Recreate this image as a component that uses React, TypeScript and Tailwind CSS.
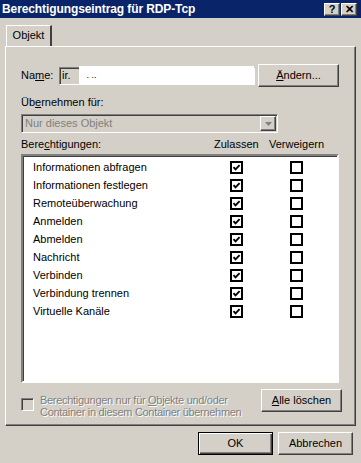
import type { ReactNode } from "react";

const font = { fontFamily: '"Liberation Sans", Arial, sans-serif' };

const perms = [
  "Informationen abfragen",
  "Informationen festlegen",
  "Remoteüberwachung",
  "Anmelden",
  "Abmelden",
  "Nachricht",
  "Verbinden",
  "Verbindung trennen",
  "Virtuelle Kanäle",
];

// classic raised 3D push button
function Btn({ children, w, primary }: { children: ReactNode; w: string; primary?: boolean }) {
  return (
    <button
      type="button"
      className={
        primary
          ? `${w} h-[23px] border border-black bg-[#d4d0c8] text-[11px] text-black shadow-[inset_1px_1px_#ffffff,inset_-1px_-1px_#404040,inset_-2px_-2px_#808080]`
          : `${w} h-[23px] border border-t-white border-l-white border-r-[#404040] border-b-[#404040] bg-[#d4d0c8] text-[11px] text-black shadow-[inset_-1px_-1px_#808080]`
      }
    >
      {children}
    </button>
  );
}

function Check({ on }: { on: boolean }) {
  return (
    <svg width="13" height="13" viewBox="0 0 13 13" className="shrink-0">
      <rect x="1" y="1" width="11" height="11" fill="#fff" stroke="#000" strokeWidth="2" />
      {on && <path d="M3.5 6.2 L5.5 8.3 L9.6 4.2" fill="none" stroke="#000" strokeWidth="1.9" />}
    </svg>
  );
}

function TitleBtn({ children }: { children: ReactNode }) {
  return (
    <div className="grid h-[13px] w-[16px] place-items-center border border-t-white border-l-white border-r-[#404040] border-b-[#404040] bg-[#d4d0c8] text-[11px] font-bold leading-none text-black shadow-[inset_-1px_-1px_#808080]">
      {children}
    </div>
  );
}

export default function App() {
  return (
    <div style={font} className="flex h-[463px] w-[361px] flex-col overflow-hidden bg-[#d4d0c8] text-[11px] text-black">
      {/* title bar */}
      <div className="flex h-[18px] items-center bg-[#0a246a] pl-[2px] pr-[4px]">
        <span className="text-[12px] font-bold tracking-[-0.1px] text-white">Berechtigungseintrag für RDP-Tcp</span>
        <div className="ml-auto flex gap-[1px]">
          <TitleBtn>?</TitleBtn>
          <TitleBtn>✕</TitleBtn>
        </div>
      </div>

      {/* tab strip */}
      <div className="ml-[6px] mt-[7px] flex">
        <div className="flex h-[21px] w-[46px] items-center justify-center border-l border-t border-r-2 border-l-white border-t-white border-r-[#404040] pb-[1px]">
          Objekt
        </div>
      </div>

      {/* tab panel */}
      <div className="mx-[5px] flex h-[380px] flex-col border border-l-white border-t-white border-r-[#404040] border-b-[#404040] pl-[15px] pr-[13px] shadow-[inset_-1px_-1px_#808080]">
        <div className="mt-[17px] flex items-center">
          <span className="w-[38px]">
            Na<u>m</u>e:
          </span>
          <div className="flex h-[18px] w-[196px] items-center border border-t-[#808080] border-l-[#808080] border-r-white border-b-white bg-[#d4d0c8] pl-[2px] shadow-[inset_1px_1px_#404040]">
            <span>ir.</span>
            <div className="ml-[8px] flex h-[19px] flex-1 items-center bg-white pl-[8px] text-[9px] leading-none">
              . ..
            </div>
          </div>
          <div className="ml-[3px]">
            <Btn w="w-[81px]">
              <u>Ä</u>ndern...
            </Btn>
          </div>
        </div>

        <div className="mt-[9px] leading-[13px]">
          Üb<u>e</u>rnehmen für:
        </div>

        <div className="mt-[5px] flex h-[19px] w-[257px] items-center border border-t-[#808080] border-l-[#808080] border-r-white border-b-white bg-[#d4d0c8] shadow-[inset_1px_1px_#404040]">
          <span className="flex-1 pl-[3px] text-[#808080]">Nur dieses Objekt</span>
          <div className="mr-[1px] grid h-[15px] w-[16px] place-items-center border border-t-white border-l-white border-r-[#404040] border-b-[#404040] shadow-[inset_-1px_-1px_#808080]">
            <svg width="7" height="4" viewBox="0 0 7 4">
              <path d="M0 0 H7 L3.5 4 Z" fill="#808080" />
            </svg>
          </div>
        </div>

        <div className="mt-[5px] flex leading-[13px]">
          <span className="w-[193px]">
            Bere<u>c</u>htigungen:
          </span>
          <span className="w-[55px]">Zulassen</span>
          <span>Verweigern</span>
        </div>

        <div className="mt-[3px] flex h-[229px] w-[318px] flex-col border-2 border-t-[#808080] border-l-[#808080] border-r-white border-b-white bg-white pt-[2px] shadow-[inset_1px_1px_#404040]">
          {perms.map((p) => (
            <div key={p} className="flex h-[18px] items-center pl-[10px]">
              <span className="w-[197px]">{p}</span>
              <Check on />
              <span className="w-[47px]" />
              <Check on={false} />
            </div>
          ))}
        </div>

        <div className="mt-[6px] flex">
          <div className="mt-[9px] h-[13px] w-[13px] shrink-0 border border-t-[#808080] border-l-[#808080] border-r-white border-b-white shadow-[inset_1px_1px_#404040]" />
          <div className="ml-[6px] mt-[5px] whitespace-nowrap leading-[12px] tracking-[-0.3px] text-[#808080] [text-shadow:1px_1px_#ffffff]">
            Berechtigungen nur für <u>O</u>bjekte und/oder
            <br />
            Container in diesem Container übernehmen
          </div>
          <div className="ml-auto">
            <Btn w="w-[81px]">
              <u>A</u>lle löschen
            </Btn>
          </div>
        </div>
      </div>

      <div className="mt-[6px] flex justify-end gap-[5px] pr-[8px]">
        <Btn w="w-[75px]" primary>
          OK
        </Btn>
        <Btn w="w-[75px]">Abbrechen</Btn>
      </div>
    </div>
  );
}
